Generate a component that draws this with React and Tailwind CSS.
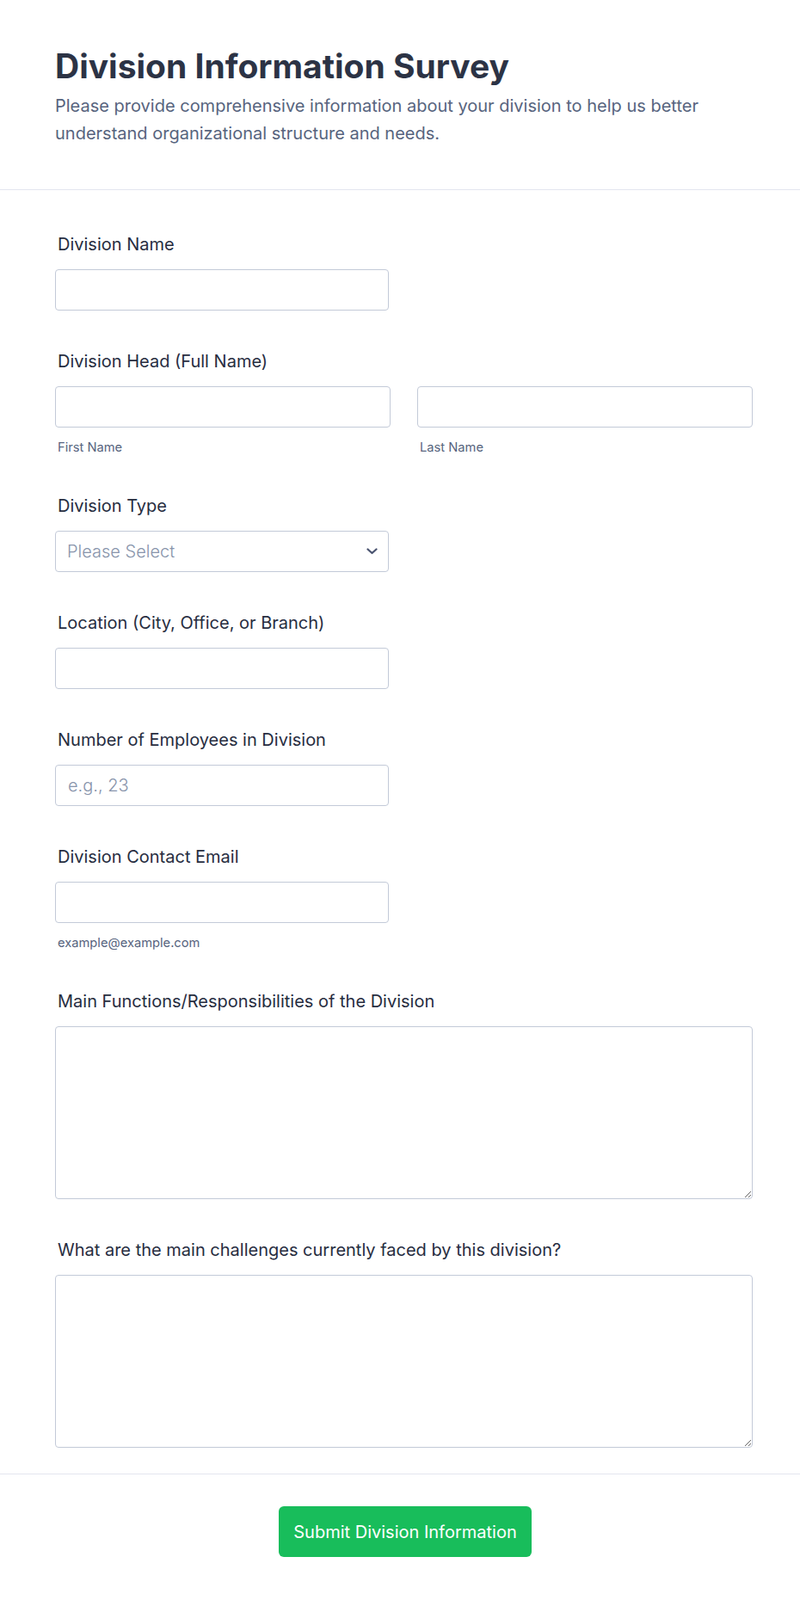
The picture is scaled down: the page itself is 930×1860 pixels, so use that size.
import React from 'react';

// Shared look for the plain text inputs
const inputCls =
  'block h-12 w-full rounded border border-[#c3cad8] bg-white px-[14px] text-[20px] font-light text-[#2c3345] placeholder:text-[#8894ab] outline-none';

const Label = ({ children }) => (
  <label className="mb-[15px] block pl-[3px] text-[20px] font-normal leading-7 text-[#272d3f]">
    {children}
  </label>
);

const SubLabel = ({ children }) => (
  <div className="mt-[14px] pl-[3px] text-[14.7px] leading-[18px] text-[#57647e]">{children}</div>
);

const TextField = ({ label, placeholder, type = 'text', sub }) => (
  <div>
    <Label>{label}</Label>
    <div className="w-[388px]">
      <input type={type} placeholder={placeholder} className={inputCls} />
    </div>
    {sub && <SubLabel>{sub}</SubLabel>}
  </div>
);

const AreaField = ({ label }) => (
  <div>
    <Label>{label}</Label>
    <textarea className="block h-[201px] w-full rounded border border-[#c3cad8] bg-white px-[14px] py-3 text-[20px] text-[#2c3345] outline-none" />
  </div>
);

export default function App() {
  return (
    <div className="min-h-screen bg-white font-['Inter',sans-serif]">
      {/* Header */}
      <header className="border-b border-[#e3e5ef] px-16 pt-[53px] pb-[49px]">
        <h1 className="text-[39px] font-bold leading-[48px] text-[#2c3345]">Division Information Survey</h1>
        <p className="mt-[6px] text-[20px] leading-8 text-[#57647e]">
          Please provide comprehensive information about your division to help us better understand
          organizational structure and needs.
        </p>
      </header>

      {/* Form fields */}
      <form className="flex flex-col gap-[45px] pl-16 pr-[55px] pt-[49px] pb-[30px]">
        <TextField label="Division Name" />

        <div>
          <Label>Division Head (Full Name)</Label>
          <div className="grid grid-cols-2 gap-[31px]">
            <div>
              <input type="text" className={inputCls} />
              <SubLabel>First Name</SubLabel>
            </div>
            <div>
              <input type="text" className={inputCls} />
              <SubLabel>Last Name</SubLabel>
            </div>
          </div>
        </div>

        <div>
          <Label>Division Type</Label>
          <div className="relative w-[388px]">
            <select
              defaultValue=""
              className="block h-12 w-full appearance-none rounded border border-[#c3cad8] bg-white pl-[13px] pr-10 text-[20px] font-light text-[#8894ab] outline-none"
            >
              <option value="" disabled>
                Please Select
              </option>
              <option>Operations</option>
              <option>Sales</option>
              <option>Support</option>
            </select>
            <svg
              className="pointer-events-none absolute right-[13px] top-1/2 -translate-y-1/2"
              width="13"
              height="8"
              viewBox="0 0 13 8"
              fill="none"
            >
              <path d="M1.5 1.5l5 4.5 5-4.5" stroke="#4a5470" strokeWidth="2.2" strokeLinecap="round" strokeLinejoin="round" />
            </svg>
          </div>
        </div>

        <TextField label="Location (City, Office, or Branch)" />
        <TextField label="Number of Employees in Division" placeholder="e.g., 23" type="text" />
        <TextField label="Division Contact Email" type="email" sub="example@example.com" />
        <AreaField label="Main Functions/Responsibilities of the Division" />
        <AreaField label="What are the main challenges currently faced by this division?" />
      </form>

      {/* Footer */}
      <footer className="flex justify-center border-t border-[#e3e5ef] pl-[67px] pr-[55px] pt-[37px] pb-[50px]">
        <button
          type="button"
          className="h-[59px] rounded-md bg-[#18bd5b] px-[17px] text-[20px] leading-7 text-white"
        >
          Submit Division Information
        </button>
      </footer>
    </div>
  );
}
